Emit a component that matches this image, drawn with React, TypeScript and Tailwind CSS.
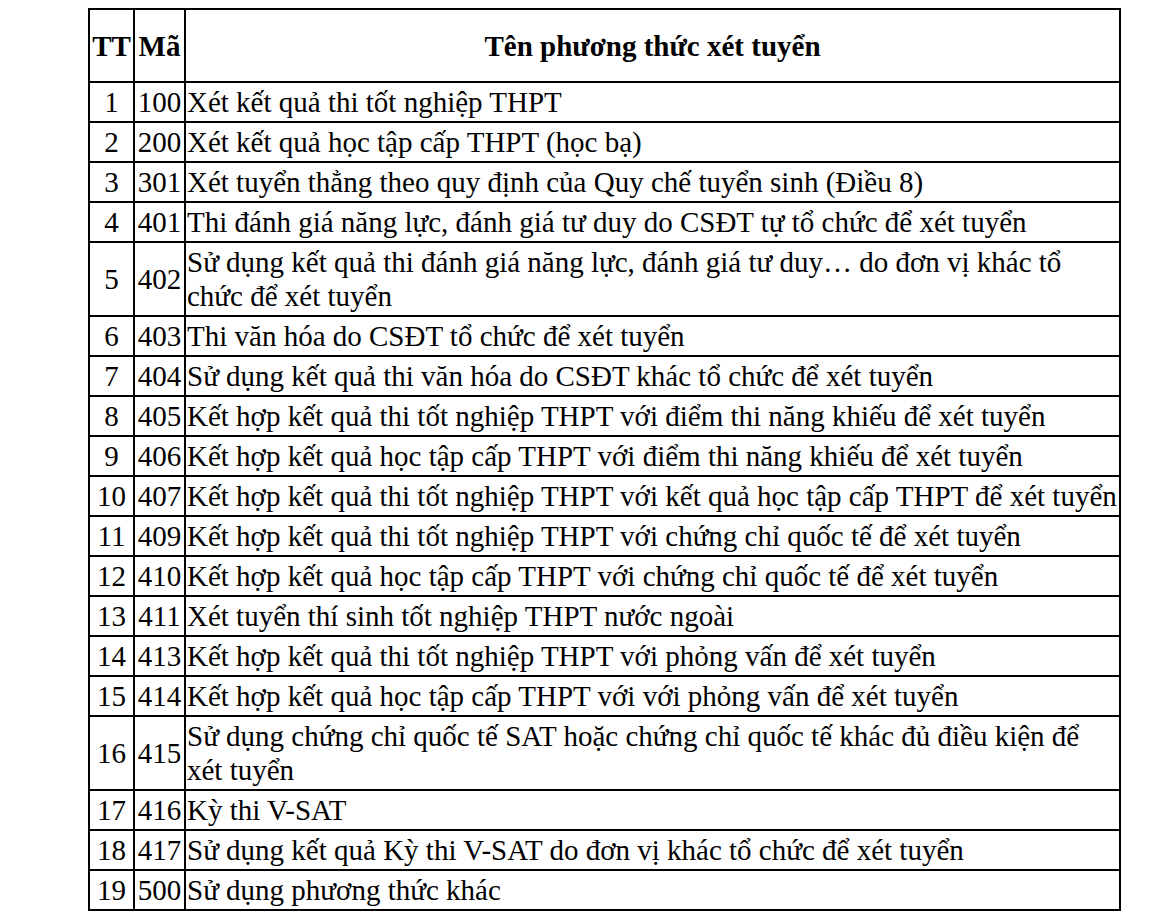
const rows: [string, string, string][] = [
  ["1", "100", "Xét kết quả thi tốt nghiệp THPT"],
  ["2", "200", "Xét kết quả học tập cấp THPT (học bạ)"],
  ["3", "301", "Xét tuyển thẳng theo quy định của Quy chế tuyển sinh (Điều 8)"],
  ["4", "401", "Thi đánh giá năng lực, đánh giá tư duy do CSĐT tự tổ chức để xét tuyển"],
  ["5", "402", "Sử dụng kết quả thi đánh giá năng lực, đánh giá tư duy… do đơn vị khác tổ chức để xét tuyển"],
  ["6", "403", "Thi văn hóa do CSĐT tổ chức để xét tuyển"],
  ["7", "404", "Sử dụng kết quả thi văn hóa do CSĐT khác tổ chức để xét tuyển"],
  ["8", "405", "Kết hợp kết quả thi tốt nghiệp THPT với điểm thi năng khiếu để xét tuyển"],
  ["9", "406", "Kết hợp kết quả học tập cấp THPT với điểm thi năng khiếu để xét tuyển"],
  ["10", "407", "Kết hợp kết quả thi tốt nghiệp THPT với kết quả học tập cấp THPT để xét tuyển"],
  ["11", "409", "Kết hợp kết quả thi tốt nghiệp THPT với chứng chỉ quốc tế để xét tuyển"],
  ["12", "410", "Kết hợp kết quả học tập cấp THPT với chứng chỉ quốc tế để xét tuyển"],
  ["13", "411", "Xét tuyển thí sinh tốt nghiệp THPT nước ngoài"],
  ["14", "413", "Kết hợp kết quả thi tốt nghiệp THPT với phỏng vấn để xét tuyển"],
  ["15", "414", "Kết hợp kết quả học tập cấp THPT với với phỏng vấn để xét tuyển"],
  ["16", "415", "Sử dụng chứng chỉ quốc tế SAT hoặc chứng chỉ quốc tế khác đủ điều kiện để xét tuyển"],
  ["17", "416", "Kỳ thi V-SAT"],
  ["18", "417", "Sử dụng kết quả Kỳ thi V-SAT do đơn vị khác tổ chức để xét tuyển"],
  ["19", "500", "Sử dụng phương thức khác"],
];

export default function App() {
  return (
    <div className="min-h-[921px] w-[1170px] bg-white pt-[8px] pl-[88px] font-['Liberation_Serif',serif] text-black">
      <table className="w-[1033px] table-fixed border-collapse border-2 border-black text-[29px] leading-[34px]">
        <colgroup>
          <col className="w-[45px]" />
          <col className="w-[51px]" />
          <col />
        </colgroup>
        <thead>
          <tr className="h-[73px]">
            <th className="border-2 border-black p-0 text-center font-bold">TT</th>
            <th className="border-2 border-black p-0 text-center font-bold">Mã</th>
            <th className="border-2 border-black p-0 text-center font-bold">Tên phương thức xét tuyển</th>
          </tr>
        </thead>
        <tbody>
          {rows.map(([tt, ma, name]) => (
            <tr key={tt}>
              <td className="border-2 border-black px-0 py-[2px] text-center align-middle">{tt}</td>
              <td className="border-2 border-black px-0 py-[2px] text-center align-middle">{ma}</td>
              <td className="border-2 border-black py-[2px] pr-0 pl-[1px] text-left align-middle">{name}</td>
            </tr>
          ))}
        </tbody>
      </table>
    </div>
  );
}
